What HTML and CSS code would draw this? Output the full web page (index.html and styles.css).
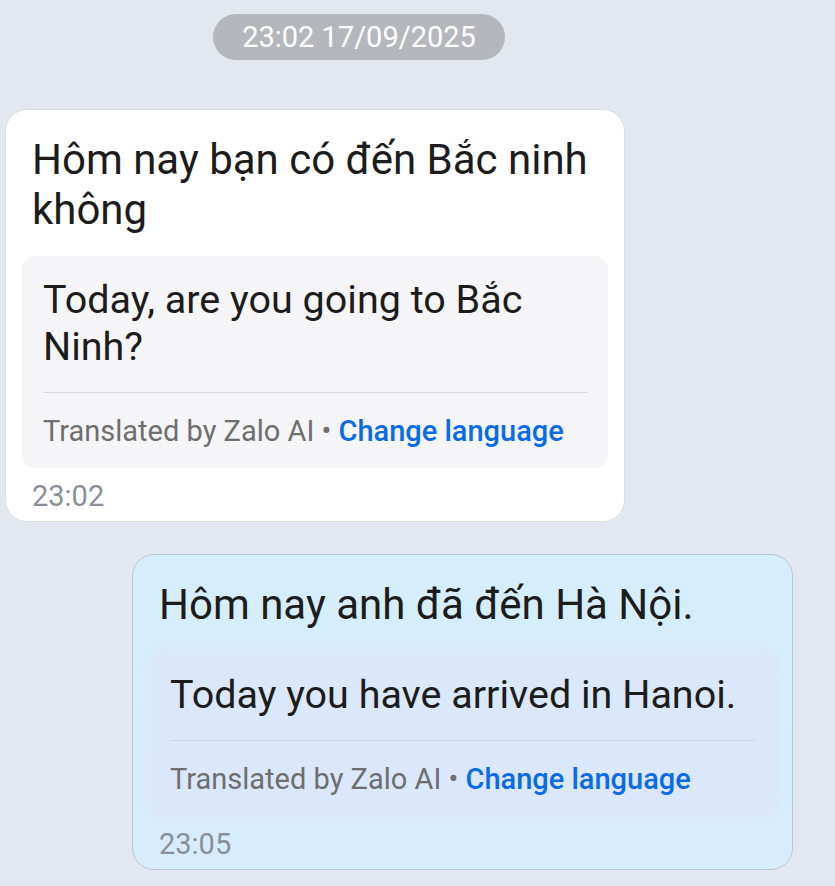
FILE: index.html
```html
<!DOCTYPE html>
<html lang="vi">
<head>
    <meta charset="UTF-8">
    <meta name="viewport" content="width=device-width, initial-scale=1.0">
    <title>Zalo chat</title>
    <link rel="stylesheet" href="styles.css">
</head>
<body>
    <div class="chat">
        <div class="date-pill">23:02 17/09/2025</div>

        <div class="bubble bubble-in">
            <p class="msg">Hôm nay bạn có đến Bắc ninh không</p>
            <div class="translation">
                <p class="msg">Today, are you going to Bắc Ninh?</p>
                <div class="divider"></div>
                <p class="credit">Translated by Zalo AI • <a href="#" class="change">Change language</a></p>
            </div>
            <div class="time">23:02</div>
        </div>

        <div class="bubble bubble-out">
            <p class="msg">Hôm nay anh đã đến Hà Nội.</p>
            <div class="translation">
                <p class="msg">Today you have arrived in Hanoi.</p>
                <div class="divider"></div>
                <p class="credit">Translated by Zalo AI • <a href="#" class="change">Change language</a></p>
            </div>
            <div class="time">23:05</div>
        </div>
    </div>
</body>
</html>
```

FILE: styles.css
```css
body {
    margin: 0;
    background: #e3e8f0;
    font-family: Roboto, "Noto Sans", Arial, sans-serif;
    color: #1c1c1c;
}
.chat {
    display: flex;
    flex-direction: column;
    align-items: flex-start;
    padding-top: 14px;
}
.date-pill {
    margin-left: 213px;
    width: 292px;
    height: 46px;
    line-height: 46px;
    border-radius: 23px;
    background: #b4b7bc;
    color: #fff;
    font-size: 29px;
    text-align: center;
}
.bubble {
    box-sizing: border-box;
    border-radius: 22px;
    padding: 25px 16px 9px;
}
.bubble-in {
    margin-top: 49px;
    margin-left: 5px;
    width: 620px;
    background: #fff;
    border: 1px solid #dadde3;
}
.bubble-out {
    margin-top: 32px;
    margin-left: 132px;
    width: 661px;
    background: linear-gradient(180deg, #d5edfc 0%, #d8ecfb 100%);
    border: 1px solid #b7c9d6;
}
.msg {
    margin: 0;
    padding-left: 10px;
    font-size: 42px;
    line-height: 50px;
}
.translation {
    margin-top: 21px;
    border-radius: 14px;
    padding: 20px 21px 20px;
}
.translation .msg {
    padding-left: 0;
    font-size: 39.5px;
    line-height: 47px;
}
.bubble-in .translation {
    background: #f5f5f7;
}
.bubble-out .translation {
    background: #dbe7fa;
    box-shadow: 0 0 8px 2px #dbe7fa;
}
.divider {
    margin-top: 22px;
    height: 1px;
    background: #dcdcdc;
}
.bubble-out .divider {
    background: #cdd6e6;
}
.credit {
    margin: 21px 0 0;
    font-size: 29px;
    line-height: 34px;
    color: #6e6e6e;
}
.change {
    color: #0a6be6;
    font-weight: 500;
    text-decoration: none;
}
.time {
    margin-top: 12px;
    padding-left: 10px;
    font-size: 29px;
    line-height: 32px;
    color: #8a9099;
}
```
